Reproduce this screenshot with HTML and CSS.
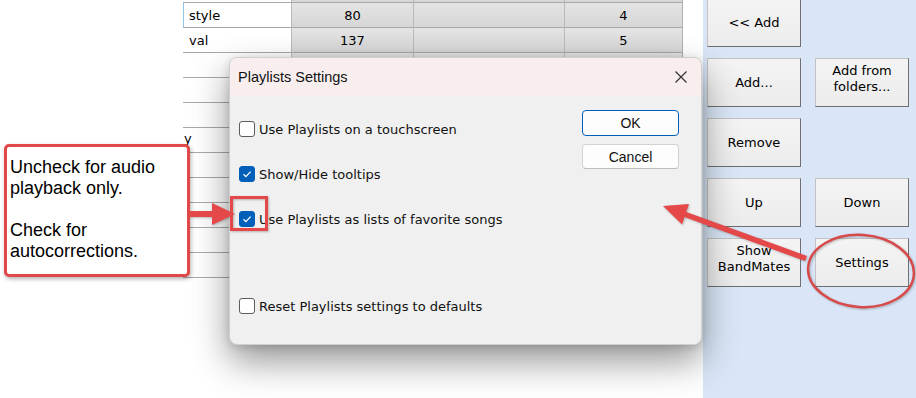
FILE: index.html
```html
<!DOCTYPE html>
<html lang="en">
<head>
    <meta charset="UTF-8">
    <title>Playlists Settings</title>
    <link rel="stylesheet" href="styles.css">
</head>
<body>

    <div class="screen">
        <div class="gutter"></div>

        <!-- Song list grid -->
        <div class="sheet">
            <table class="grid">
                <colgroup>
                    <col class="c-name"><col class="c-a"><col class="c-b"><col class="c-c">
                </colgroup>
                <tr><td class="name"></td><td class="num"></td><td class="num"></td><td class="num"></td></tr>
                <tr><td class="name sel">style</td><td class="num">80</td><td class="num"></td><td class="num">4</td></tr>
                <tr><td class="name">val</td><td class="num">137</td><td class="num"></td><td class="num">5</td></tr>
                <tr><td class="name"></td><td class="num"></td><td class="num"></td><td class="num"></td></tr>
                <tr><td class="name"></td><td class="num"></td><td class="num"></td><td class="num"></td></tr>
                <tr><td class="name"></td><td class="num"></td><td class="num"></td><td class="num"></td></tr>
                <tr><td class="name tail">y</td><td class="num"></td><td class="num"></td><td class="num"></td></tr>
                <tr><td class="name"></td><td class="num"></td><td class="num"></td><td class="num"></td></tr>
                <tr><td class="name"></td><td class="num"></td><td class="num"></td><td class="num"></td></tr>
                <tr><td class="name"></td><td class="num"></td><td class="num"></td><td class="num"></td></tr>
                <tr><td class="name"></td><td class="num"></td><td class="num"></td><td class="num"></td></tr>
                <tr><td class="name"></td><td class="num"></td><td class="num"></td><td class="num"></td></tr>
            </table>
        </div>

        <!-- Playlist buttons -->
        <div class="side">
            <div class="buttons">
                <button>&lt;&lt; Add</button>
                <button class="first">Add...</button>
                <button class="two">Add from<br>folders...</button>
                <button class="first">Remove</button>
                <button class="first">Up</button>
                <button>Down</button>
                <button class="two">Show<br>BandMates</button>
                <button>Settings</button>
            </div>
        </div>
    </div>

    <!-- Settings dialog -->
    <div class="dialog">
        <div class="dialog-title">
            <span>Playlists Settings</span>
            <svg class="close" width="14" height="14" viewBox="0 0 14 14">
                <path d="M1.5 1.5 L12.5 12.5 M12.5 1.5 L1.5 12.5" stroke="#303030" stroke-width="1.2" fill="none"/>
            </svg>
        </div>
        <div class="dialog-body">
            <div class="options">
                <label class="check"><span class="box"></span>Use Playlists on a touchscreen</label>
                <label class="check">
                    <span class="box on"><svg width="14" height="14" viewBox="0 0 14 14"><path d="M3.5 7.2 L5.9 9.6 L10.6 4.6" stroke="#fff" stroke-width="1.3" fill="none"/></svg></span>Show/Hide tooltips
                </label>
                <label class="check">
                    <span class="box on"><svg width="14" height="14" viewBox="0 0 14 14"><path d="M3.5 7.2 L5.9 9.6 L10.6 4.6" stroke="#fff" stroke-width="1.3" fill="none"/></svg></span>Use Playlists as lists of favorite songs
                </label>
                <label class="check reset"><span class="box"></span>Reset Playlists settings to defaults</label>
            </div>
            <div class="actions">
                <button class="primary">OK</button>
                <button class="cancel">Cancel</button>
            </div>
        </div>
    </div>

    <!-- Annotations -->
    <div class="callout">
        <p>Uncheck for audio<br>playback only.</p>
        <p>Check for<br>autocorrections.</p>
    </div>

    <svg class="marks" width="916" height="398" viewBox="0 0 916 398">
        <rect x="189" y="211" width="25" height="6" fill="#e54848"/>
        <polygon points="212,203 235,214 212,225" fill="#e54848"/>
        <rect x="231.5" y="197.5" width="35" height="32" fill="none" stroke="#e54848" stroke-width="3"/>
        <line x1="806" y1="258.5" x2="684" y2="214" stroke="#e54848" stroke-width="5.5"/>
        <polygon points="663,206 689,204 682,224.5" fill="#e54848"/>
        <ellipse cx="861" cy="271" rx="53" ry="36" fill="none" stroke="#d84a4a" stroke-width="2.5" transform="rotate(4 861 271)"/>
    </svg>

</body>
</html>
```

FILE: styles.css
```css
/* Basic Reset */
* {
    margin: 0;
    padding: 0;
    box-sizing: border-box;
}

body {
    width: 916px;
    height: 398px;
    overflow: hidden;
    position: relative;
    background: #ffffff;
    font-family: "DejaVu Sans", Verdana, sans-serif;
    font-size: 13px;
    color: #000;
}

.screen {
    display: flex;
    height: 100%;
}

.gutter {
    width: 183px;
    flex: none;
}

/* Grid of songs */
.sheet {
    width: 520px;
    flex: none;
    padding-right: 20px;
}

.grid {
    width: 500px;
    table-layout: fixed;
    border-collapse: separate;
    border-spacing: 0;
    margin-top: -22px;
}

.c-name { width: 108px; }
.c-a { width: 122px; }
.c-b { width: 151px; }
.c-c { width: 119px; }

.grid tr {
    height: 25px;
}

.grid td {
    border-bottom: 1px solid #a8a8a8;
    white-space: nowrap;
    overflow: hidden;
}

.grid td.name {
    padding-left: 6px;
}

.grid td.sel {
    box-shadow: inset 1px 0 0 #8fc6ee;
}

.grid td.tail {
    padding-left: 1px;
    vertical-align: top;
    padding-top: 3px;
}

.grid td.num {
    text-align: center;
    background: linear-gradient(#e4e4e4, #d6d6d6);
    border-left: 1px solid #b9b9b9;
}

.grid td.num:last-child {
    border-right: 1px solid #b0b0b0;
}

/* Right button panel */
.side {
    flex: 1;
    background: #dae6f7;
    padding-left: 4px;
}

.buttons {
    display: grid;
    grid-template-columns: 94px 94px;
    grid-auto-rows: 49px;
    gap: 11px 14px;
    margin-top: -2px;
}

.buttons button {
    font-family: "DejaVu Sans", Verdana, sans-serif;
    font-size: 13px;
    line-height: 16px;
    color: #000;
    background: linear-gradient(#f4f4f4, #ececec);
    border: 1px solid #c2c2c2;
    border-right-color: #6f6f6f;
    border-bottom-color: #6f6f6f;
}

.buttons .first {
    grid-column: 1;
}

.buttons .two {
    padding-bottom: 7px;
}

/* Dialog */
.dialog {
    position: absolute;
    left: 229px;
    top: 57px;
    width: 473px;
    height: 288px;
    background: #f0f0f0;
    border: 1px solid #cfcfcf;
    border-radius: 8px;
    box-shadow: 0 16px 36px rgba(0, 0, 0, 0.42), 0 2px 8px rgba(0, 0, 0, 0.14);
    overflow: hidden;
    font-family: "Liberation Sans", Arial, sans-serif;
}

.dialog-title {
    height: 38px;
    background: #f8eeee;
    display: flex;
    align-items: center;
    justify-content: space-between;
    padding: 0 13px 0 8px;
    font-size: 14.5px;
    color: #111;
}

.dialog-body {
    display: flex;
    padding: 14px 22px 0 9px;
}

.options {
    flex: 1;
    display: flex;
    flex-direction: column;
    gap: 29px;
    padding-top: 11px;
}

.check {
    display: flex;
    align-items: center;
    gap: 4px;
    height: 16px;
    font-family: "DejaVu Sans", Verdana, sans-serif;
    font-size: 13px;
    color: #111;
}

.box {
    width: 16px;
    height: 16px;
    flex: none;
    border: 1px solid #5c5c5c;
    border-radius: 3px;
    background: #fff;
    display: flex;
    align-items: center;
    justify-content: center;
}

.box.on {
    background: #005fb8;
    border-color: #005fb8;
}

.check.reset {
    margin-top: 42px;
}

.actions {
    width: 97px;
    display: flex;
    flex-direction: column;
    gap: 8px;
}

.actions button {
    height: 25px;
    font-family: "Liberation Sans", Arial, sans-serif;
    font-size: 14px;
    color: #111;
    background: #fdfdfd;
    border: 1px solid #d2d2d2;
    border-bottom-color: #bdbdbd;
    border-radius: 4px;
}

.actions .primary {
    height: 26px;
    border: 1px solid #005fb8;
}

/* Annotations */
.callout {
    position: absolute;
    left: 4px;
    top: 144px;
    width: 186px;
    height: 133px;
    border: 3px solid #e24848;
    border-radius: 5px;
    background: #fff;
    padding: 10px 3px;
    font-family: "Liberation Sans", Arial, sans-serif;
    font-size: 18px;
    line-height: 21px;
    color: #000;
    box-shadow: 1px 2px 4px rgba(0, 0, 0, 0.3);
}

.callout p {
    margin-bottom: 21px;
}

.marks {
    position: absolute;
    left: 0;
    top: 0;
    pointer-events: none;
    filter: drop-shadow(1px 1px 1px rgba(0, 0, 0, 0.25));
}
```
